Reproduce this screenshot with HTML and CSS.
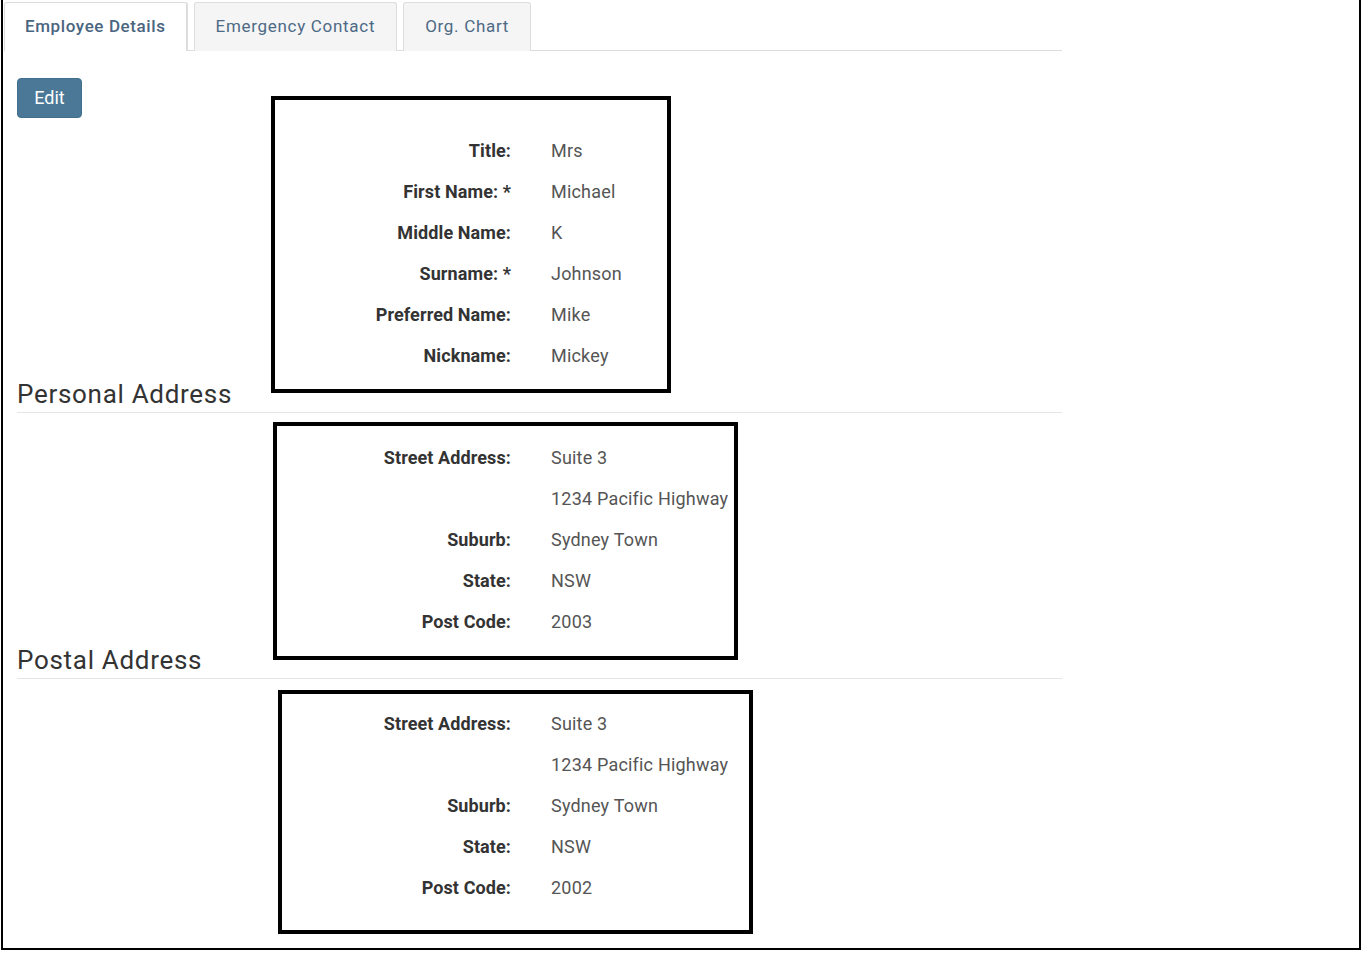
FILE: index.html
```html
<!DOCTYPE html>
<html lang="en">
<head>
<meta charset="utf-8">
<title>Employee Details</title>
<link rel="stylesheet" href="styles.css">
</head>
<body>
<div class="frame">
  <ul class="tabs">
    <li class="tab active">Employee Details</li>
    <li class="tab">Emergency Contact</li>
    <li class="tab">Org. Chart</li>
  </ul>
  <div class="content">
    <button class="btn-edit" type="button">Edit</button>

    <div class="fields first">
      <div class="label">Title:</div><div class="value">Mrs</div>
      <div class="label">First Name: *</div><div class="value">Michael</div>
      <div class="label">Middle Name:</div><div class="value">K</div>
      <div class="label">Surname: *</div><div class="value">Johnson</div>
      <div class="label">Preferred Name:</div><div class="value">Mike</div>
      <div class="label">Nickname:</div><div class="value">Mickey</div>
    </div>

    <h2 class="section-title">Personal Address</h2>
    <div class="fields">
      <div class="label">Street Address:</div><div class="value">Suite 3</div>
      <div class="label"></div><div class="value">1234 Pacific Highway</div>
      <div class="label">Suburb:</div><div class="value">Sydney Town</div>
      <div class="label">State:</div><div class="value">NSW</div>
      <div class="label">Post Code:</div><div class="value">2003</div>
    </div>

    <h2 class="section-title">Postal Address</h2>
    <div class="fields">
      <div class="label">Street Address:</div><div class="value">Suite 3</div>
      <div class="label"></div><div class="value">1234 Pacific Highway</div>
      <div class="label">Suburb:</div><div class="value">Sydney Town</div>
      <div class="label">State:</div><div class="value">NSW</div>
      <div class="label">Post Code:</div><div class="value">2002</div>
    </div>
  </div>

  <div class="mark mark-1"></div>
  <div class="mark mark-2"></div>
  <div class="mark mark-3"></div>
</div>
</body>
</html>
```

FILE: styles.css
```css
html, body {
  margin: 0;
  padding: 0;
  background: #fff;
}

body {
  font-family: Roboto, "Liberation Sans", Arial, sans-serif;
  color: #333;
}

.frame {
  position: relative;
  box-sizing: border-box;
  margin-left: 1px;
  width: 1360px;
  height: 950px;
  border: 2px solid #000;
  border-top: none;
  padding-top: 2px;
}

.tabs {
  list-style: none;
  margin: 0 0 0 1px;
  padding: 0;
  width: 1058px;
  display: flex;
  gap: 6px;
  border-bottom: 1px solid #ddd;
  height: 48px;
}

.tab {
  box-sizing: border-box;
  height: 49px;
  padding: 0 21px 3px;
  display: flex;
  align-items: center;
  font-size: 17px;
  letter-spacing: 0.7px;
  color: #4d6a85;
  background: #f5f5f5;
  border: 1px solid #ddd;
  border-bottom: none;
  border-radius: 3px 3px 0 0;
}

.tab.active {
  background: #fff;
  border-right-width: 2px;
  padding: 0 20px 3px;
  font-weight: 500;
  letter-spacing: 0.6px;
  color: #4a6580;
}

.content {
  padding: 27px 0 0 14px;
  width: 1045px;
}

.btn-edit {
  display: block;
  width: 65px;
  height: 40px;
  border: 1px solid #41708e;
  border-radius: 4px;
  background: #4a7896;
  color: #fff;
  font-family: Roboto, "Liberation Sans", Arial, sans-serif;
  font-size: 18px;
  padding: 0 0 2px;
  cursor: pointer;
}

.fields {
  display: grid;
  grid-template-columns: 494px 1fr;
  column-gap: 40px;
  grid-auto-rows: 41px;
  margin-top: 24px;
}

.fields.first {
  margin-top: 12px;
}

.label,
.value {
  display: flex;
  align-items: center;
  font-size: 18px;
  padding-bottom: 1px;
}

.label {
  justify-content: flex-end;
  font-weight: 700;
  color: #333;
  letter-spacing: 0.1px;
}

.value {
  color: #555;
  letter-spacing: 0.2px;
}

.section-title {
  margin: 5px 0 0;
  padding-bottom: 5px;
  font-size: 26px;
  line-height: 26px;
  font-weight: 400;
  color: #333;
  letter-spacing: 0.7px;
  border-bottom: 1px solid #e5e5e5;
}

.mark {
  position: absolute;
  box-sizing: border-box;
  border: 4px solid #000;
}

.mark-1 { left: 268px; top: 96px; width: 400px; height: 297px; }
.mark-2 { left: 270px; top: 422px; width: 465px; height: 238px; }
.mark-3 { left: 275px; top: 690px; width: 475px; height: 244px; }
```
